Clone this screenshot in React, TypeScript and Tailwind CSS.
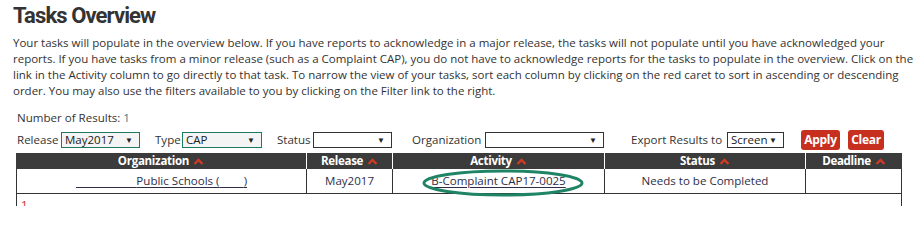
import React from 'react';

const Caret: React.FC = () => (
  <svg width="11" height="7" viewBox="0 0 11 7" className="inline-block ml-[4px] mb-[1px]">
    <polyline points="1.5,6 5.5,2 9.5,6" fill="none" stroke="#d13a22" strokeWidth="2.4" />
  </svg>
);

const FakeSelect: React.FC<{ value?: string; width: string; green?: boolean }> = ({ value, width, green }) => (
  <div
    className={`${width} h-[16px] shrink-0 flex items-center justify-between pl-[3px] pr-[6px] text-[11.5px] leading-none text-[#222] ${
      green ? 'border border-[#1f7a62] bg-[#f4f4f4]' : 'border border-[#333] bg-white'
    }`}
  >
    <span>{value}</span>
    <span className="text-[8px]">▼</span>
  </div>
);

const App: React.FC = () => {
  return (
    <div className="w-[917px] h-[206px] overflow-hidden bg-white text-[#333] font-['Open_Sans',sans-serif]">
      {/* Title + intro */}
      <div className="px-[13px] pt-[3px]">
        <h1 className="font-['Roboto',sans-serif] font-bold text-[22px] leading-[26px] tracking-[-0.9px] text-[#333]">
          Tasks Overview
        </h1>
        <p className="mt-[6px] text-[11.5px] leading-[16px] text-[#333] whitespace-nowrap">
          Your tasks will populate in the overview below. If you have reports to acknowledge in a major release, the tasks will not populate until you have acknowledged your
          <br />
          reports. If you have tasks from a minor release (such as a Complaint CAP), you do not have to acknowledge reports for the tasks to populate in the overview. Click on the
          <br />
          link in the Activity column to go directly to that task. To narrow the view of your tasks, sort each column by clicking on the red caret to sort in ascending or descending
          <br />
          order. You may also use the filters available to you by clicking on the Filter link to the right.
        </p>
      </div>

      {/* Filters */}
      <div className="pl-[17px] mt-[11px] text-[11.55px] leading-[16px] whitespace-nowrap">
        <div>
          Number of Results: <span className="text-[#2b7d8c]">1</span>
        </div>
        <div className="flex items-center mt-[4px] h-[20px]">
          <span className="w-[44px] shrink-0">Release</span>
          <FakeSelect value="May2017" width="w-[79px]" green />
          <span className="ml-[15px] w-[27px] shrink-0">Type</span>
          <FakeSelect value="CAP" width="w-[80px]" green />
          <span className="ml-[15px] w-[36px] shrink-0">Status</span>
          <FakeSelect width="w-[79px]" />
          <span className="ml-[20px] w-[73px] shrink-0">Organization</span>
          <FakeSelect width="w-[119px]" />
          <span className="ml-[27px] w-[96px] shrink-0">Export Results to</span>
          <FakeSelect value="Screen" width="w-[57px]" />
          <button className="ml-[17px] w-[39px] h-[20px] shrink-0 rounded-[3px] bg-[#c7301f] text-white font-bold text-[12px] leading-none tracking-[-0.3px]">
            Apply
          </button>
          <button className="ml-[8px] w-[36px] h-[20px] shrink-0 rounded-[3px] bg-[#c7301f] text-white font-bold text-[12px] leading-none tracking-[-0.3px]">
            Clear
          </button>
        </div>
      </div>

      {/* Table */}
      <div className="ml-[16px] w-[886px] mt-[3px] text-[11.55px] whitespace-nowrap">
        <div className="flex h-[16px] bg-[#3b3b3b] text-white font-bold leading-[16px] tracking-[-0.3px]">
          <div className="w-[291px] text-center border-r border-white">Organization<Caret /></div>
          <div className="w-[86px] text-center border-r border-white">Release<Caret /></div>
          <div className="w-[212px] text-center border-r border-white">Activity<Caret /></div>
          <div className="w-[201px] text-center border-r border-white">Status<Caret /></div>
          <div className="flex-1 text-center">Deadline<Caret /></div>
        </div>
        <div className="flex h-[25px] border-l border-r border-b border-[#333] leading-[24px] text-[#2e2e48]">
          <div className="w-[290px] text-center border-r border-[#333]">
            <span className="underline underline-offset-[2px]">
              <span className="text-transparent">xxxxxxxxxx</span>
              Public Schools (<span className="text-transparent">xxxx</span>)
            </span>
          </div>
          <div className="w-[86px] text-center border-r border-[#333]">May2017</div>
          <div className="relative w-[212px] text-center border-r border-[#333]">
            <span className="underline underline-offset-[2px]">B-Complaint CAP17-0025</span>
            <svg className="absolute left-[29px] top-[0px]" width="162" height="29" viewBox="0 0 162 29">
              <ellipse cx="81" cy="14" rx="79" ry="12" fill="none" stroke="#1f8466" strokeWidth="3" />
            </svg>
          </div>
          <div className="w-[201px] text-center border-r border-[#333]">Needs to be Completed</div>
          <div className="flex-1" />
        </div>
        <div className="h-[20px] border-l border-r border-[#333] pl-[4px] pt-[3px] text-[#c7301f] leading-[16px]">1</div>
      </div>
    </div>
  );
};

export default App;
